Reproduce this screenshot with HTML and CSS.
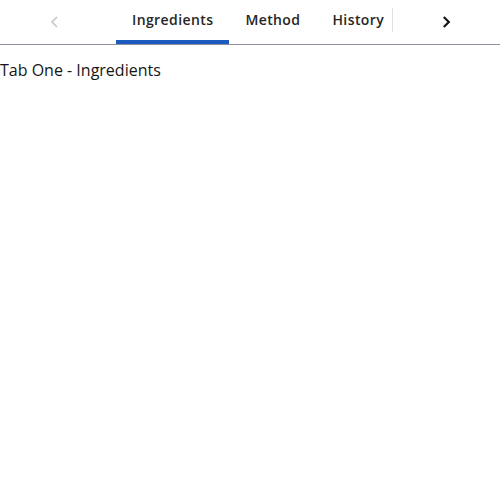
FILE: index.html
```html
<!DOCTYPE html>
<html>
<head>
<meta charset="utf-8">
<link rel="stylesheet" href="styles.css">
</head>
<body>
<div class="tabbar">
  <button class="scroll-btn disabled" aria-label="Scroll left">
    <svg width="16" height="16" viewBox="0 0 16 16"><path d="M11 3 L6 8 L11 13" fill="none" stroke="currentColor" stroke-width="1.6"/></svg>
  </button>
  <div class="tabs">
    <div class="tab active">Ingredients</div>
    <div class="tab">Method</div>
    <div class="tab">History</div>
  </div>
  <button class="scroll-btn" aria-label="Scroll right">
    <svg width="16" height="16" viewBox="0 0 16 16"><path d="M4.8 3 L9.8 8 L4.8 13" fill="none" stroke="currentColor" stroke-width="2.2"/></svg>
  </button>
</div>
<div class="panel">Tab One - Ingredients</div>
</body>
</html>
```
FILE: styles.css
```css
body {
  margin: 0;
  font-family: "Open Sans", "Noto Sans", sans-serif;
  color: #161616;
  background: #fff;
}
.tabbar {
  display: flex;
  height: 44px;
  border-bottom: 1px solid #8d9199;
}
.scroll-btn {
  width: 107px;
  flex: none;
  border: 0;
  background: none;
  padding: 0;
  display: flex;
  align-items: center;
  justify-content: center;
  color: #161616;
}
.scroll-btn.disabled {
  color: #c6c6c6;
}
.tabs {
  flex: 1;
  display: flex;
  padding-left: 9px;
  position: relative;
  overflow: hidden;
}
.tabs::after {
  content: "";
  position: absolute;
  right: 0;
  top: 8px;
  height: 24px;
  width: 1px;
  background: #e0e0e0;
}
.tab {
  padding: 0 16px;
  font-size: 14px;
  font-weight: 600;
  letter-spacing: 0.4px;
  line-height: 40px;
  border-bottom: 4px solid transparent;
  white-space: nowrap;
  color: #262626;
}
.tab.active {
  border-bottom-color: #1b5bbd;
}
.panel {
  font-size: 16px;
  line-height: 24px;
  padding-top: 13px;
}
```
